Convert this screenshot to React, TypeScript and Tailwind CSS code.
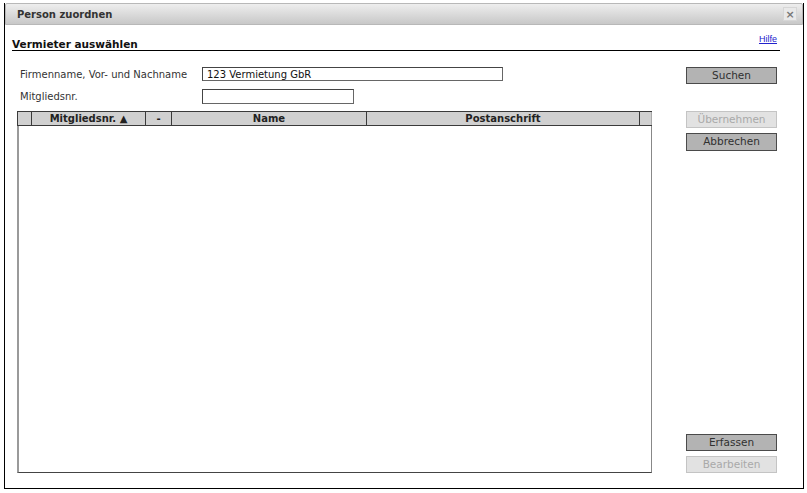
import React from "react";

const cols = [
  { w: "w-[14px]", t: "" },
  { w: "w-[114px]", t: "Mitgliedsnr. ▲" },
  { w: "w-[26px]", t: "-" },
  { w: "w-[195px]", t: "Name" },
  { w: "w-[273px]", t: "Postanschrift" },
  { w: "flex-1", t: "" },
];

function Btn({ label, disabled, className = "" }: { label: string; disabled?: boolean; className?: string }) {
  return (
    <div
      className={
        "h-[17px] w-[91px] flex items-center justify-center text-[10.5px] border " +
        (disabled
          ? "bg-[#e2e2e2] border-[#c4c4c4] text-[#a9a9a9] "
          : "bg-[#b3b3b3] border-[#4a4a4a] text-[#303030] ") +
        className
      }
    >
      {label}
    </div>
  );
}

export default function App() {
  return (
    <div
      className="w-[807px] h-[493px] bg-white pl-[4px] pt-[3px] text-[10px] text-[#333]"
      style={{ fontFamily: '"DejaVu Sans", Verdana, sans-serif' }}
    >
      <div className="w-[800px] h-[486px] border-x border-b border-black flex flex-col">
        <div className="h-[22px] border border-[#b8b8b8] rounded-t-[2px] bg-gradient-to-b from-[#eeeeee] to-[#c8c8c8] flex items-center justify-between pl-[11px] pr-[5px]">
          <span className="font-bold text-[10px] text-[#333]">Person zuordnen</span>
          <span className="w-[14px] h-[14px] bg-[#e9e9e9] border border-[#d6d6d6] flex items-center justify-center text-[#777] font-bold text-[11px] leading-none">
            ×
          </span>
        </div>
        <div className="flex-1 flex flex-col pl-[7px] pr-[23px]">
          <div className="mt-[10px] h-[16px] border-b border-black flex justify-between items-end pb-[1px]">
            <span className="font-bold text-[10.5px] text-[#111] leading-none">Vermieter auswählen</span>
            <span
              className="text-[9px] text-[#2222cc] underline leading-none mb-[5px] mr-[3px]"
              style={{ fontFamily: '"Liberation Sans Narrow", "Liberation Sans", Arial, sans-serif' }}
            >
              Hilfe
            </span>
          </div>
          <div className="flex pl-[5px]">
            <div className="w-[635px] flex flex-col">
              <div className="mt-[16px] flex items-center h-[14px]">
                <span className="w-[185px] pl-[3px] text-[#333]">Firmenname, Vor- und Nachname</span>
                <div className="w-[301px] h-[14px] border border-[#666] border-l-[#444] border-t-[#444] flex items-center pl-[4px] text-[#111]">
                  123 Vermietung GbR
                </div>
              </div>
              <div className="mt-[8px] flex items-center h-[15px]">
                <span className="w-[185px] pl-[3px] text-[#333]">Mitgliedsnr.</span>
                <div className="w-[152px] h-[15px] border border-[#666] border-l-[#444] border-t-[#444]" />
              </div>
              <div className="mt-[7px] h-[362px] flex flex-col">
                <div className="h-[15px] flex bg-[#d0d0d0] border-y border-l border-[#3a3a3a]">
                  {cols.map((c, i) => (
                    <div
                      key={i}
                      className={
                        c.w +
                        " flex items-center justify-center font-bold text-[10px] text-[#222] leading-none " +
                        (i < cols.length - 1 ? "border-r border-[#3a3a3a]" : "border-r border-[#aaaaaa]")
                      }
                    >
                      {c.t}
                    </div>
                  ))}
                </div>
                <div className="flex-1 border-l-2 border-l-[#9a9a9a] border-r border-r-[#888] border-b border-b-[#444] bg-white" />
              </div>
            </div>
            <div className="ml-[34px] flex flex-col">
              <Btn label="Suchen" className="mt-[16px]" />
              <Btn label="Übernehmen" disabled className="mt-[27px]" />
              <Btn label="Abbrechen" className="mt-[5px] h-[18px]" />
              <div className="flex-1" />
              <Btn label="Erfassen" />
              <Btn label="Bearbeiten" disabled className="mt-[5px]" />
            </div>
          </div>
        </div>
      </div>
    </div>
  );
}
